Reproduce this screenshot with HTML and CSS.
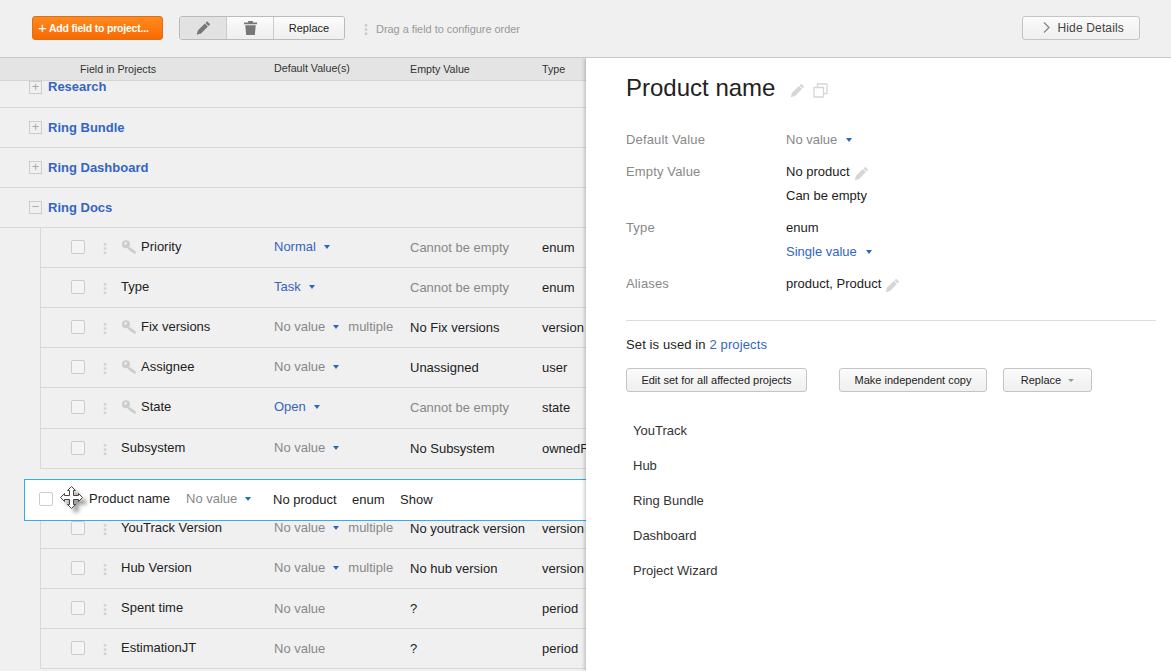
FILE: index.html
```html
<!DOCTYPE html>
<html lang="en">
<head>
  <meta charset="UTF-8" />
  <title>Fields in Projects</title>
  <link rel="stylesheet" href="styles.css">
</head>
<body>
  <svg class="defs" width="0" height="0">
    <symbol id="i-pencil" viewBox="0 0 16 16">
      <path d="M11.9 0.9l3.2 3.2-1.7 1.700-3.200-3.200zM9.500 3.300l3.200 3.200-7.300 7.300-4.700 1.400 1.400-4.700z" fill="currentColor"/>
    </symbol>
    <symbol id="i-key" viewBox="0 0 16 16">
      <path d="M5 1.200a4 4 0 1 1-.1 8 4 4 0 0 1 .1-8zm-.4 1.900a1.300 1.300 0 1 0 .1 2.600 1.300 1.300 0 0 0-.1-2.600zM8 7.600l7 5.200-.2 1.800-1.600.1-1-1.100-1 .4-.5-1.400-1.100-.1-2.800-2.900z" fill="currentColor" fill-rule="evenodd"/>
    </symbol>
    <symbol id="i-dots" viewBox="0 0 4 13">
      <rect x="0.500" y="0" width="3" height="3" fill="currentColor"/>
      <rect x="0.500" y="5" width="3" height="3" fill="currentColor"/>
      <rect x="0.500" y="10" width="3" height="3" fill="currentColor"/>
    </symbol>
  </svg>

  <div class="toolbar">
    <button class="btn-add"><span class="plus">+</span> Add field to project...</button>
    <div class="btn-group">
      <button class="seg seg-active"><svg class="seg-icon"><use href="#i-pencil"/></svg></button>
      <button class="seg">
        <svg class="seg-icon" viewBox="0 0 16 16"><path d="M5.500 0.500h5v1.600h4.500v2H1v-2h4.500zM2.400 5h11.200l-1 10.500H3.400z" fill="currentColor"/></svg>
      </button>
      <button class="seg seg-text">Replace</button>
    </div>
    <svg class="hint-dots"><use href="#i-dots"/></svg>
    <span class="hint">Drag a field to configure order</span>
    <button class="btn-details">
      <svg class="chevron" viewBox="0 0 7 11"><path d="M1 0.500l5 5-5 5" fill="none" stroke="currentColor" stroke-width="1.300"/></svg>
      Hide Details
    </button>
  </div>

  <div class="main">
    <div class="left">
      <div class="table-head">
        <span class="head-name">Field in Projects</span>
        <span class="col-default">Default Value(s)</span>
        <span class="col-empty">Empty Value</span>
        <span>Type</span>
      </div>

      <div class="group group-first"><span class="toggle">+</span><a class="group-name">Research</a></div>
      <div class="group"><span class="toggle">+</span><a class="group-name">Ring Bundle</a></div>
      <div class="group"><span class="toggle">+</span><a class="group-name">Ring Dashboard</a></div>
      <div class="group"><span class="toggle">&minus;</span><a class="group-name">Ring Docs</a></div>

      <div class="fields">
        <div class="row">
          <span class="check"></span><svg class="dots"><use href="#i-dots"/></svg>
          <span class="col-name"><svg class="key"><use href="#i-key"/></svg>Priority</span>
          <span class="col-default"><a class="link">Normal</a><i class="caret"></i></span>
          <span class="col-empty muted">Cannot be empty</span><span>enum</span>
        </div>
        <div class="row">
          <span class="check"></span><svg class="dots"><use href="#i-dots"/></svg>
          <span class="col-name">Type</span>
          <span class="col-default"><a class="link">Task</a><i class="caret"></i></span>
          <span class="col-empty muted">Cannot be empty</span><span>enum</span>
        </div>
        <div class="row">
          <span class="check"></span><svg class="dots"><use href="#i-dots"/></svg>
          <span class="col-name"><svg class="key"><use href="#i-key"/></svg>Fix versions</span>
          <span class="col-default muted">No value<i class="caret"></i><span class="multi">multiple</span></span>
          <span class="col-empty">No Fix versions</span><span>version</span>
        </div>
        <div class="row">
          <span class="check"></span><svg class="dots"><use href="#i-dots"/></svg>
          <span class="col-name"><svg class="key"><use href="#i-key"/></svg>Assignee</span>
          <span class="col-default muted">No value<i class="caret"></i></span>
          <span class="col-empty">Unassigned</span><span>user</span>
        </div>
        <div class="row row-tall">
          <span class="check"></span><svg class="dots"><use href="#i-dots"/></svg>
          <span class="col-name"><svg class="key"><use href="#i-key"/></svg>State</span>
          <span class="col-default"><a class="link">Open</a><i class="caret"></i></span>
          <span class="col-empty muted">Cannot be empty</span><span>state</span>
        </div>
        <div class="row">
          <span class="check"></span><svg class="dots"><use href="#i-dots"/></svg>
          <span class="col-name">Subsystem</span>
          <span class="col-default muted">No value<i class="caret"></i></span>
          <span class="col-empty">No Subsystem</span><span>ownedField</span>
        </div>
      </div>

      <div class="drop-gap"></div>

      <div class="fields">
        <div class="row">
          <span class="check"></span><svg class="dots"><use href="#i-dots"/></svg>
          <span class="col-name">YouTrack Version</span>
          <span class="col-default muted">No value<i class="caret"></i><span class="multi">multiple</span></span>
          <span class="col-empty">No youtrack version</span><span>version</span>
        </div>
        <div class="row">
          <span class="check"></span><svg class="dots"><use href="#i-dots"/></svg>
          <span class="col-name">Hub Version</span>
          <span class="col-default muted">No value<i class="caret"></i><span class="multi">multiple</span></span>
          <span class="col-empty">No hub version</span><span>version</span>
        </div>
        <div class="row">
          <span class="check"></span><svg class="dots"><use href="#i-dots"/></svg>
          <span class="col-name">Spent time</span>
          <span class="col-default muted lower">No value</span>
          <span class="col-empty">?</span><span>period</span>
        </div>
        <div class="row">
          <span class="check"></span><svg class="dots"><use href="#i-dots"/></svg>
          <span class="col-name">EstimationJT</span>
          <span class="col-default muted lower">No value</span>
          <span class="col-empty">?</span><span>period</span>
        </div>
      </div>

      <div class="drag-row">
        <span class="check"></span>
        <svg class="move" viewBox="0 0 24 26">
          <path class="move-shadow" d="M11 1l4 4h-2v5h5V8l4 4-4 4v-2h-5v5h2l-4 4-4-4h2v-5H4v2l-4-4 4-4v2h5V5H7z" transform="translate(5 5)"/>
          <path class="move-arrow" d="M11 1l4 4h-2v5h5V8l4 4-4 4v-2h-5v5h2l-4 4-4-4h2v-5H4v2l-4-4 4-4v2h5V5H7z" transform="translate(0.500 0.500)"/>
        </svg>
        <span class="drag-name">Product name</span>
        <span class="drag-default muted">No value<i class="caret"></i></span>
        <span class="drag-empty">No product</span>
        <span class="drag-type">enum</span>
        <span>Show</span>
      </div>
    </div>

    <div class="details">
      <div class="title-row">
        <h1>Product name</h1>
        <svg class="icon-title"><use href="#i-pencil"/></svg>
        <svg class="icon-copy" viewBox="0 0 15 15"><path d="M4.500 4V1h9.500v9.500H11M1 4.500h9.500V14H1z" fill="none" stroke="currentColor" stroke-width="1.300"/></svg>
      </div>

      <div class="props">
        <div class="prop-label">Default Value</div>
        <div class="prop-value"><div class="line muted">No value<i class="caret caret-wide"></i></div></div>
        <div class="prop-label">Empty Value</div>
        <div class="prop-value">
          <div class="line">No product<svg class="icon-edit"><use href="#i-pencil"/></svg></div>
          <div class="line">Can be empty</div>
        </div>
        <div class="prop-label">Type</div>
        <div class="prop-value">
          <div class="line">enum</div>
          <div class="line"><a class="link">Single value</a><i class="caret caret-wide"></i></div>
        </div>
        <div class="prop-label">Aliases</div>
        <div class="prop-value"><div class="line">product, Product<svg class="icon-edit"><use href="#i-pencil"/></svg></div></div>
      </div>

      <hr class="divider">

      <p class="used">Set is used in <a class="link">2 projects</a></p>

      <div class="actions">
        <button class="btn btn-edit">Edit set for all affected projects</button>
        <button class="btn btn-copy">Make independent copy</button>
        <button class="btn btn-replace">Replace<i class="caret-grey"></i></button>
      </div>

      <ul class="projects">
        <li>YouTrack</li>
        <li>Hub</li>
        <li>Ring Bundle</li>
        <li>Dashboard</li>
        <li>Project Wizard</li>
      </ul>
    </div>
  </div>
</body>
</html>
```

FILE: styles.css
```css
* {
  box-sizing: border-box;
}
html, body {
  height: 100%;
}
body {
  margin: 0;
  overflow: hidden;
  background-color: #f0f0f0;
  color: #222;
  font-family: "Liberation Sans", Arial, sans-serif;
  font-size: 13px;
  display: flex;
  flex-direction: column;
}
button {
  font-family: inherit;
  cursor: pointer;
}
.defs {
  position: absolute;
}

/* top bar */
.toolbar {
  height: 57px;
  flex: none;
  display: flex;
  align-items: flex-start;
  padding: 16px 31px 0 32px;
}
.btn-add {
  width: 131px;
  height: 24px;
  padding: 0 0 0 5px;
  text-align: left;
  color: #fff;
  font-size: 10.5px;
  font-weight: bold;
  letter-spacing: -0.2px;
  white-space: nowrap;
  background: linear-gradient(#ff8a1f, #f96a00);
  border: 1px solid #d9701a;
  border-radius: 3px;
}
.plus {
  font-size: 15px;
  font-weight: normal;
  line-height: 12px;
  vertical-align: -1px;
}
.btn-group {
  margin-left: 16px;
  display: flex;
  height: 24px;
  width: 166px;
  border: 1px solid #bbb;
  border-radius: 3px;
  overflow: hidden;
}
.seg {
  width: 47px;
  padding: 0;
  border: none;
  border-right: 1px solid #ccc;
  background: linear-gradient(#fbfbfb, #efefef);
  display: flex;
  align-items: center;
  justify-content: center;
}
.seg-active {
  background: #e2e2e2;
}
.seg-text {
  width: auto;
  flex: 1;
  border-right: none;
  font-size: 11px;
  color: #222;
}
.seg-icon {
  width: 15px;
  height: 16px;
  color: #777;
}
.hint-dots {
  width: 4px;
  height: 11px;
  margin: 8px 0 0 19px;
  color: #ccc;
}
.hint {
  margin: 7px 0 0 8px;
  font-size: 11px;
  letter-spacing: -0.05px;
  color: #999;
}
.btn-details {
  margin-left: auto;
  width: 118px;
  height: 24px;
  padding: 0 0 0 20px;
  text-align: left;
  font-size: 12px;
  letter-spacing: 0.15px;
  color: #444;
  background: linear-gradient(#fbfbfb, #efefef);
  border: 1px solid #c4c4c4;
  border-radius: 3px;
}
.chevron {
  width: 7px;
  height: 11px;
  margin-right: 4px;
  color: #888;
  vertical-align: -1px;
}

/* main split */
.main {
  flex: 1;
  display: flex;
  min-height: 0;
  overflow: hidden;
  border-top: 1px solid #c8c8c8;
}
.left {
  position: relative;
  width: 586px;
  flex: none;
  overflow: hidden;
}
.table-head {
  height: 23px;
  display: flex;
  align-items: center;
  font-size: 10.7px;
  color: #333;
  background-color: #e4e4e4;
  border-bottom: 1px solid #d4d4d4;
}
.head-name {
  margin-left: 80px;
  width: 194px;
}
.table-head .col-default {
  width: 136px;
}
.table-head .col-empty {
  width: 132px;
}

/* project groups */
.group {
  height: 40px;
  display: flex;
  align-items: center;
  padding-left: 29px;
  border-bottom: 1px solid #d8d8d8;
}
.group-first {
  height: 27px;
  align-items: flex-start;
}
.toggle {
  width: 13px;
  height: 13px;
  margin-right: 6px;
  border: 1px solid #ccc;
  color: #aaa;
  font-size: 13px;
  line-height: 10px;
  text-align: center;
}
.group-name {
  color: #3565c0;
  font-weight: bold;
  font-size: 13px;
}
.group-first .group-name {
  line-height: 12px;
}

/* field rows */
.fields {
  margin-left: 40px;
  border-left: 1px solid #d8d8d8;
}
.row {
  height: 40px;
  display: flex;
  align-items: center;
  white-space: nowrap;
  padding-left: 30px;
  border-bottom: 1px solid #d8d8d8;
  color: #222;
}
.row-tall {
  height: 41px;
  padding-bottom: 1px;
}
.check {
  width: 14px;
  height: 14px;
  flex: none;
  margin-top: -2px;
  background-color: #f4f4f4;
  border: 1px solid #ccc;
  border-radius: 2px;
}
.dots {
  width: 4px;
  height: 11px;
  flex: none;
  margin: 1px 0 0 18px;
  color: #d2d2d2;
}
.col-name {
  width: 153px;
  flex: none;
  margin: -2px 0 0 14px;
  display: flex;
  align-items: center;
}
.col-default {
  width: 136px;
  flex: none;
  margin-top: -2px;
}
.col-default.lower {
  margin-top: 0;
}
.col-empty {
  width: 132px;
  flex: none;
}
.key {
  width: 16px;
  height: 16px;
  margin-right: 4px;
  color: #ccc;
}
.muted {
  color: #888;
}
.link {
  color: #3565c0;
}
.multi {
  margin-left: 9px;
  color: #888;
}
.caret {
  display: inline-block;
  margin-left: 8px;
  vertical-align: 2px;
  border-left: 3.5px solid transparent;
  border-right: 3.5px solid transparent;
  border-top: 4px solid #2a66c4;
}
.caret-wide {
  margin-left: 9px;
}
.drop-gap {
  height: 40px;
}

/* row being dragged */
.drag-row {
  position: absolute;
  left: 24px;
  top: 421px;
  width: 600px;
  height: 42px;
  display: flex;
  align-items: center;
  padding: 0 0 2px 14px;
  white-space: nowrap;
  background-color: #fff;
  border: 1px solid #2fb0ee;
}
.drag-row .check {
  margin-top: 0;
  background-color: #fff;
}
.move {
  width: 24px;
  height: 26px;
  flex: none;
  margin: -2px 5px 0 7px;
  overflow: visible;
}
.move-shadow {
  fill: #666;
  opacity: 0.75;
  filter: blur(2px);
}
.move-arrow {
  fill: #fff;
  stroke: #444;
  stroke-width: 1;
}
.drag-name {
  width: 97px;
  margin-top: -2px;
}
.drag-default {
  width: 87px;
  margin-top: -2px;
}
.drag-empty {
  width: 79px;
}
.drag-type {
  width: 48px;
}

/* details panel */
.details {
  position: relative;
  flex: 1;
  padding: 0 15px 0 40px;
  background-color: #fff;
  box-shadow: -1px 0 4px rgba(0,0,0,0.25);
}
.title-row {
  height: 60px;
  display: flex;
  align-items: center;
}
h1 {
  margin: 0;
  font-size: 24px;
  font-weight: normal;
  color: #222;
}
.icon-title {
  width: 15px;
  height: 15px;
  margin: 5px 0 0 15px;
  color: #d6d6d6;
}
.icon-copy {
  width: 15px;
  height: 15px;
  margin: 5px 0 0 8px;
  color: #d6d6d6;
}
.props {
  margin-top: 10px;
  display: grid;
  grid-template-columns: 160px 1fr;
  row-gap: 8px;
}
.prop-label {
  height: 24px;
  line-height: 24px;
  letter-spacing: 0.15px;
  color: #888;
}
.line {
  height: 24px;
  line-height: 24px;
  display: flex;
  align-items: center;
}
.line .caret {
  flex: none;
}
.icon-edit {
  width: 15px;
  height: 15px;
  margin: 2px 0 0 4px;
  color: #d6d6d6;
}
.divider {
  margin: 24px 0 0;
  border: none;
  border-top: 1px solid #ddd;
}
.used {
  margin: 16px 0 0;
  line-height: 15px;
  letter-spacing: 0.12px;
}
.actions {
  margin-top: 16px;
  display: flex;
}
.btn {
  height: 24px;
  padding: 0;
  font-size: 11px;
  color: #222;
  background: linear-gradient(#fbfbfb, #efefef);
  border: 1px solid #c4c4c4;
  border-radius: 3px;
}
.btn-edit {
  width: 181px;
  margin-left: 0;
}
.btn-copy {
  width: 148px;
  margin-left: 32px;
}
.btn-replace {
  width: 89px;
  margin-left: 16px;
}
.caret-grey {
  display: inline-block;
  margin-left: 7px;
  vertical-align: 2px;
  border-left: 3px solid transparent;
  border-right: 3px solid transparent;
  border-top: 3px solid #999;
}
.projects {
  list-style: none;
  margin: 21px 0 0;
  padding: 0 0 0 7px;
}
.projects li {
  height: 35px;
  line-height: 35px;
  color: #333;
}
```
